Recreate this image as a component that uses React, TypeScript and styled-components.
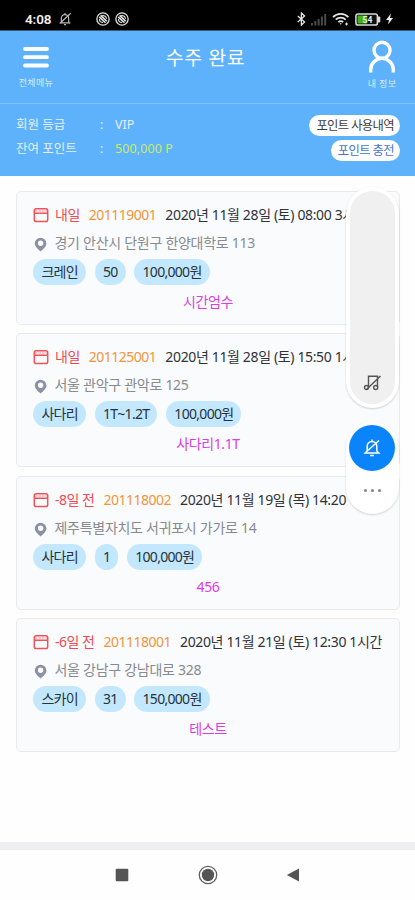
import React from 'react';
import styled, { createGlobalStyle } from 'styled-components';

const GlobalStyle = createGlobalStyle`
  * { box-sizing: border-box; }
  body { margin: 0; background: #fff; font-family: 'Noto Sans', 'Noto Sans CJK KR', sans-serif; }
`;

const Screen = styled.div`
  position: relative;
  width: 415px;
  height: 900px;
  overflow: hidden;
  display: flex;
  flex-direction: column;
  background: #fefefe;
`;

const StatusBar = styled.div`
  height: 31px;
  flex: none;
  background: #000;
  border-bottom: 1px solid #2f5a80;
  color: #eee;
  display: flex;
  align-items: center;
  padding: 8px 22px 0 25px;
`;

const Clock = styled.span`
  width: 33px;
  font: 600 13.5px/16px Roboto, sans-serif;
  letter-spacing: -0.1px;
`;

const StatusGroup = styled.div<{ $left?: number; $gap: number }>`
  display: flex;
  align-items: center;
  gap: ${(p) => p.$gap}px;
  margin-left: ${(p) => (p.$left === undefined ? 'auto' : `${p.$left}px`)};
  svg { display: block; }
`;

const Header = styled.header`
  height: 145px;
  flex: none;
  background: #5db2fb;
  color: #fff;
`;

const TitleBar = styled.div`
  height: 73px;
  border-bottom: 1px solid #7fc1fc;
  display: grid;
  grid-template-columns: 72px 1fr 72px;
`;

const Title = styled.h1`
  margin: 0;
  padding-right: 4px;
  text-align: center;
  font-size: 19.5px;
  font-weight: 400;
  line-height: 53px;
  letter-spacing: 0.5px;
`;

const NavButton = styled.div<{ $side: 'left' | 'right' }>`
  display: flex;
  flex-direction: column;
  align-items: center;
  padding-top: ${(p) => (p.$side === 'left' ? 15 : 9)}px;
  padding-left: ${(p) => (p.$side === 'right' ? 6 : 0)}px;
  svg { display: block; }
`;

const NavLabel = styled.span<{ $top: number }>`
  margin-top: ${(p) => p.$top}px;
  font-size: 9px;
  line-height: 12px;
  letter-spacing: 0.35px;
  color: #d7ecff;
  white-space: nowrap;
`;

const Account = styled.div`
  display: flex;
  justify-content: space-between;
  padding: 9px 15px 0 16px;
`;

const AccountRow = styled.div`
  display: grid;
  grid-template-columns: 84px 15px auto;
  height: 23.5px;
  line-height: 23px;
  font-size: 12.5px;
  color: #e3f1fd;
`;

const Points = styled.span`
  color: #cbea68;
  letter-spacing: 0.1px;
`;

const AccountLinks = styled.div`
  margin-top: 2px;
  display: flex;
  flex-direction: column;
  align-items: flex-end;
  gap: 4px;
`;

const AccountLink = styled.div<{ $blue?: boolean }>`
  height: 21px;
  padding: 0 6px 0 7px;
  border-radius: 11px;
  background: #fff;
  color: ${(p) => (p.$blue ? '#4876c4' : '#3c3c40')};
  font-size: 12.3px;
  line-height: 21px;
  letter-spacing: -0.6px;
  white-space: nowrap;
`;

const List = styled.main`
  flex: 1;
  padding: 15px 15px 0 16px;
  display: flex;
  flex-direction: column;
  gap: 8.4px;
`;

const Card = styled.article`
  height: 134px;
  flex: none;
  border: 1.5px solid #e8eaec;
  border-radius: 5px;
  background: #f9fbfd;
  padding: 11px 0 0 16px;
  overflow: hidden;
  font-size: 14px;
  letter-spacing: -0.5px;
  white-space: nowrap;
`;

const CardRow = styled.div<{ $h: number }>`
  display: flex;
  align-items: center;
  height: ${(p) => p.$h}px;
  line-height: ${(p) => p.$h}px;
  svg { flex: none; display: block; }
`;

const DayLabel = styled.span`
  margin-left: 6px;
  color: #ef4a52;
  font-weight: 400;
`;

const OrderNo = styled.span`
  margin: 0 9px;
  color: #f2953a;
`;

const Schedule = styled.span`
  color: #303236;
  letter-spacing: -0.36px;
`;

const Address = styled.span`
  margin-left: 5.5px;
  color: #888a8e;
  letter-spacing: -0.28px;
`;

const Tags = styled.div`
  display: flex;
  gap: 8.6px;
  height: 26px;
`;

const Tag = styled.span`
  padding: 0 8px 0 8.4px;
  border-radius: 13px;
  background: #c3e8fe;
  color: #26333c;
  line-height: 26px;
  letter-spacing: -0.7px;
`;

const Note = styled.div`
  margin-top: 5px;
  padding-right: 16px;
  height: 24px;
  line-height: 24px;
  text-align: center;
  color: #dd3be3;
  letter-spacing: -0.4px;
`;

const NavBar = styled.nav`
  height: 58px;
  flex: none;
  border-top: 8px solid #eeeff1;
  background: #fefefe;
  display: flex;
  align-items: center;
  padding: 0 115px 0 115px;
  justify-content: space-between;
`;

/* System volume overlay floating above the list */
const VolumeOverlay = styled.aside`
  position: absolute;
  left: 346px;
  top: 187px;
  width: 53px;
  display: flex;
  flex-direction: column;
  gap: 14px;
`;

const Slider = styled.div`
  height: 221px;
  border: 4px solid #fff;
  border-radius: 27px;
  background: #f0f0f0;
  box-shadow: 0 1px 2px rgba(0, 0, 0, 0.18);
  display: flex;
  align-items: flex-end;
  justify-content: center;
  padding-bottom: 12px;
`;

const ModePill = styled.div`
  height: 92px;
  border-radius: 27px;
  background: #fff;
  box-shadow: 0 1px 2px rgba(0, 0, 0, 0.16);
  display: flex;
  flex-direction: column;
  align-items: center;
  padding: 3px 1px 0 0;
`;

const MuteButton = styled.div`
  width: 46px;
  height: 46px;
  border-radius: 50%;
  background: #0a84fb;
  display: grid;
  place-items: center;
`;

const Dots = styled.div`
  margin-top: 18px;
  display: flex;
  gap: 4px;
`;

const Dot = styled.i`
  width: 3px;
  height: 3px;
  border-radius: 50%;
  background: #858585;
`;

const BellOff = ({ size, color }: { size: number; color: string }) => (
  <svg width={size} height={size} viewBox="0 0 16 16" fill="none" stroke={color} strokeWidth="1.4">
    <path d="M2 12.3h12M3.8 12V7.2a4.2 4.2 0 0 1 8.4 0V12M3.5 12 2 13M12.5 12l1.5 1M6.8 14.5h2.4M14.5 1.5 2 13.2M8 1.2V3" />
  </svg>
);

const BlockedBadge = () => (
  <svg width="14" height="14" viewBox="0 0 13 13" fill="none" stroke="#e2e2e2">
    <circle cx="6.5" cy="6.5" r="5.7" strokeWidth="1.2" />
    <path d="M3 4.5 8.8 10M4.3 3.2 10 8.6" strokeWidth="1.5" />
    <path d="M5.5 3.6c2.2-.8 4.3.7 4.2 2.8M3.2 6.5c0 2 1.4 3.3 3.4 3.3" />
  </svg>
);

const CalendarIcon = () => (
  <svg width="16" height="16" viewBox="0 0 16 16" fill="none" stroke="#ef5258">
    <rect x="1.3" y="1.7" width="13.4" height="12.8" rx="1.8" strokeWidth="1.5" />
    <path d="M1.5 6.2h13" strokeWidth="1.5" />
    <path d="M2 4h12" strokeWidth="1.2" strokeDasharray="2.5 1" opacity=".65" />
  </svg>
);

const PinIcon = () => (
  <svg width="16" height="18" viewBox="0 0 16 18">
    <path d="M7.6 3.7A5.8 5.8 0 0 0 1.8 9.500c0 3.100 3.200 5.600 5.800 8 2.600-2.400 5.800-4.900 5.800-8a5.800 5.800 0 0 0-5.800-5.800Zm0 8.300a2.700 2.700 0 1 1 0-5.400 2.700 2.700 0 0 1 0 5.400Z" fill="#8c90a3" />
  </svg>
);

type Order = { day: string; no: string; when: string; place: string; tags: string[]; note: string };

const orders: Order[] = [
  { day: '내일', no: '201119001', when: '2020년 11월 28일 (토) 08:00 3시간', place: '경기 안산시 단원구 한양대학로 113', tags: ['크레인', '50', '100,000원'], note: '시간엄수' },
  { day: '내일', no: '201125001', when: '2020년 11월 28일 (토) 15:50 1시간', place: '서울 관악구 관악로 125', tags: ['사다리', '1T~1.2T', '100,000원'], note: '사다리1.1T' },
  { day: '-8일 전', no: '201118002', when: '2020년 11월 19일 (목) 14:20', place: '제주특별자치도 서귀포시 가가로 14', tags: ['사다리', '1', '100,000원'], note: '456' },
  { day: '-6일 전', no: '201118001', when: '2020년 11월 21일 (토) 12:30 1시간', place: '서울 강남구 강남대로 328', tags: ['스카이', '31', '150,000원'], note: '테스트' },
];

export default function App() {
  return (
    <Screen>
      <GlobalStyle />
      <StatusBar>
        <Clock>4:08</Clock>
        <StatusGroup $left={0} $gap={0}>
          <BellOff size={14} color="#b5b5b5" />
        </StatusGroup>
        <StatusGroup $left={24} $gap={5}>
          <BlockedBadge />
          <BlockedBadge />
        </StatusGroup>
        <StatusGroup $gap={5}>
          <svg width="9" height="14" viewBox="0 0 9 14" fill="none" stroke="#e6e6e6" strokeWidth="1.3">
            <path d="m.8 4 6.8 6-3.2 3V1l3.2 3L.8 10" />
          </svg>
          <svg width="16" height="13" viewBox="0 0 16 13" fill="#4a4a4a">
            <path d="M0 10h2v2.500H0zM3.300 8h2v4.500h-2zM6.600 6h2v6.500h-2zM9.900 3.500h2v9h-2zM13.200 1h2v11.500h-2z" />
          </svg>
          <svg width="18" height="14" viewBox="0 0 18 14" fill="none" stroke="#e3e3e3" strokeWidth="1.7">
            <path d="M1 5.200c4.200-4.400 11.200-4.400 15.400 0M3.700 7.700c2.800-2.800 7.300-2.800 10 0M6.300 10.200c1.500-1.300 3.500-1.300 4.900 0" />
            <circle cx="8.7" cy="11.7" r=".8" fill="#e3e3e3" stroke="none" />
            <path d="M14.500 10.500v3M13 12h3" strokeWidth="1.1" />
          </svg>
          <svg width="26" height="13" viewBox="0 0 26 13">
            <rect x=".9" y=".9" width="21.5" height="11.2" rx="2.2" fill="#111" stroke="#dcdcdc" strokeWidth="1.5" />
            <path d="M23 3.500h1.300a1 1 0 0 1 1 1v4a1 1 0 0 1-1 1H23z" fill="#dcdcdc" />
            <path d="M2.500 2.500h9.800v8H2.500z" fill="#43b51c" />
            <text x="7.5" y="9.8" fontSize="8.5" fontWeight="700" fontFamily="Roboto" fill="#eee">54</text>
          </svg>
          <svg width="7" height="12" viewBox="0 0 7 12" fill="#eee">
            <path d="M5 .5 0 7h3L2 11.500 7 5H4z" />
          </svg>
        </StatusGroup>
      </StatusBar>

      <Header>
        <TitleBar>
          <NavButton $side="left">
            <svg width="26" height="22" viewBox="0 0 26 22" stroke="#fff" strokeWidth="3.8" strokeLinecap="round">
              <path d="M2 3h22M2 11.200h22M2 19.500h22" />
            </svg>
            <NavLabel $top={9}>전체메뉴</NavLabel>
          </NavButton>
          <Title>수주 완료</Title>
          <NavButton $side="right">
            <svg width="28" height="34" viewBox="0 0 28 34" fill="none" stroke="#fff" strokeWidth="3.4">
              <circle cx="14" cy="10.3" r="8" />
              <path d="M2.700 32.500v-2.800a11.300 11.300 0 0 1 22.600 0v2.800" />
            </svg>
            <NavLabel $top={4}>내 정보</NavLabel>
          </NavButton>
        </TitleBar>
        <Account>
          <div>
            <AccountRow>
              <span>회원 등급</span>
              <span>:</span>
              <span>VIP</span>
            </AccountRow>
            <AccountRow>
              <span>잔여 포인트</span>
              <span>:</span>
              <Points>500,000 P</Points>
            </AccountRow>
          </div>
          <AccountLinks>
            <AccountLink>포인트 사용내역</AccountLink>
            <AccountLink $blue>포인트 충전</AccountLink>
          </AccountLinks>
        </Account>
      </Header>

      <List>
        {orders.map((o) => (
          <Card key={o.no}>
            <CardRow $h={24}>
              <CalendarIcon />
              <DayLabel>{o.day}</DayLabel>
              <OrderNo>{o.no}</OrderNo>
              <Schedule>{o.when}</Schedule>
            </CardRow>
            <CardRow $h={32}>
              <PinIcon />
              <Address>{o.place}</Address>
            </CardRow>
            <Tags>
              {o.tags.map((t) => (
                <Tag key={t}>{t}</Tag>
              ))}
            </Tags>
            <Note>{o.note}</Note>
          </Card>
        ))}
      </List>

      <NavBar>
        <svg width="14" height="14" viewBox="0 0 14 14">
          <rect x=".7" y=".7" width="12.6" height="12.6" rx="1" fill="#555" />
        </svg>
        <svg width="20" height="20" viewBox="0 0 20 20">
          <circle cx="10" cy="10" r="8.7" fill="none" stroke="#606060" strokeWidth="1.3" />
          <circle cx="10" cy="10" r="6.2" fill="#555" />
        </svg>
        <svg width="14" height="14" viewBox="0 0 14 14">
          <path d="M13 .5v13L.8 7z" fill="#555" />
        </svg>
      </NavBar>

      <VolumeOverlay>
        <Slider>
          <svg width="19" height="18" viewBox="0 0 19 18" fill="none" stroke="#555" strokeWidth="1.4">
            <path d="M5.500 13V2.200h9V13M17.500 2 3.500 15.500" />
            <circle cx="3.5" cy="13.5" r="2" />
            <circle cx="12.7" cy="13.5" r="2" />
          </svg>
        </Slider>
        <ModePill>
          <MuteButton>
            <svg width="18" height="20" viewBox="0 0 18 20" fill="none" stroke="#fff" strokeWidth="1.5">
              <path d="M4.200 13V8.200a4.800 4.800 0 0 1 9.600 0V13l2 2H2.200ZM9 1.500v2M7 17.500h4M16 2.500 2 15" />
            </svg>
          </MuteButton>
          <Dots>
            <Dot />
            <Dot />
            <Dot />
          </Dots>
        </ModePill>
      </VolumeOverlay>
    </Screen>
  );
}
